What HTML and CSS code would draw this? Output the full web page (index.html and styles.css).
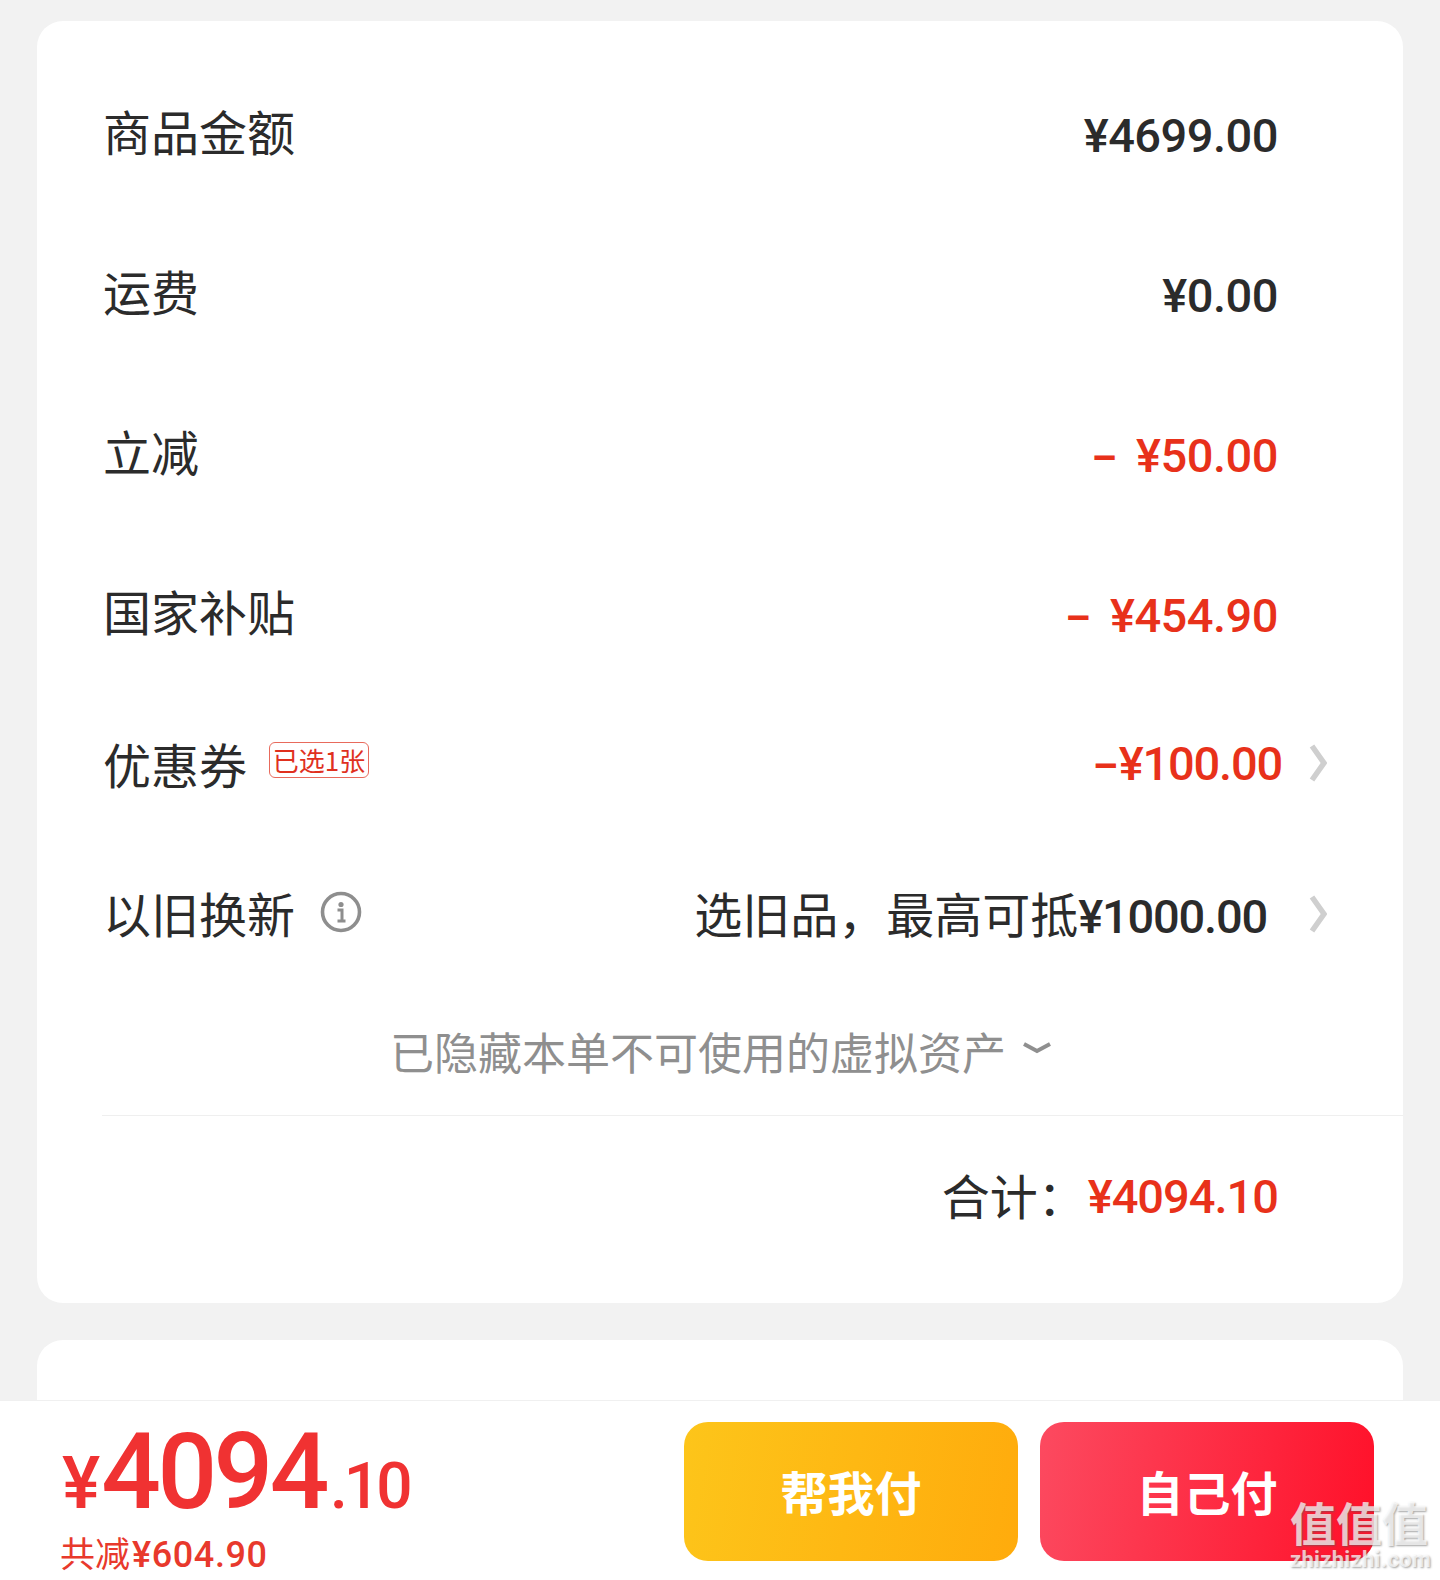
FILE: index.html
```html
<!DOCTYPE html>
<html lang="zh-CN">
<head>
<meta charset="utf-8">
<title>订单金额</title>
<link rel="stylesheet" href="styles.css">
</head>
<body>
<main class="page">
  <section class="card summary">
    <div class="row row-tall"><span class="label">商品金额</span><span class="amount pad-end">¥4699.00</span></div>
    <div class="row row-tall"><span class="label">运费</span><span class="amount pad-end">¥0.00</span></div>
    <div class="row row-tall"><span class="label">立减</span><span class="amount red pad-end"><span class="minus">–</span>¥50.00</span></div>
    <div class="row row-tall"><span class="label">国家补贴</span><span class="amount red pad-end"><span class="minus">–</span>¥454.90</span></div>
    <div class="row row-coupon">
      <span class="label-group"><span class="label">优惠券</span><span class="tag">已选1张</span></span>
      <span class="value-group">
        <span class="amount tight red"><span class="minus-tight">–</span>¥100.00</span>
        <svg class="chevron" viewBox="0 0 18 38" aria-hidden="true"><path d="M3 2 L15 19 L3 36"/></svg>
      </span>
    </div>
    <div class="row row-trade">
      <span class="label-group"><span class="label">以旧换新</span>
        <svg class="info" viewBox="0 0 42 42" aria-hidden="true"><circle cx="21" cy="21" r="18.5"/><circle class="dot" cx="21" cy="13.5" r="2.6"/><path d="M17.5 19 H22 V30 M17.5 30 H25.5"/></svg>
      </span>
      <span class="value-group trade"><span class="trade-text">选旧品，最高可抵<span class="amount tight">¥1000.00</span></span>
        <svg class="chevron" viewBox="0 0 18 38" aria-hidden="true"><path d="M3 2 L15 19 L3 36"/></svg>
      </span>
    </div>
    <div class="hidden-note"><span>已隐藏本单不可使用的虚拟资产</span>
      <svg class="caret" viewBox="0 0 30 12" aria-hidden="true"><path d="M2 2 L15 9 L28 2"/></svg>
    </div>
    <div class="total"><span class="label total-label">合计：</span><span class="amount total-amount red">¥4094.10</span></div>
  </section>
  <section class="card stub"></section>
</main>
<footer class="bar">
  <div class="price">
    <div class="price-main"><span class="yen">¥</span><span class="big">4094</span><span class="cents">.10</span></div>
    <div class="saved">共减<span class="saved-num">¥604.90</span></div>
  </div>
  <div class="actions">
    <button class="btn btn-help">帮我付</button>
    <button class="btn btn-self">自己付</button>
  </div>
</footer>
<div class="watermark"><div class="wm-cn">值值值</div><div class="wm-en">zhizhizhi.com</div></div>
</body>
</html>
```
FILE: styles.css
```css
* { box-sizing: border-box; }
html, body { margin: 0; padding: 0; }
body {
  width: 1440px;
  height: 1580px;
  position: relative;
  overflow: hidden;
  background: #f2f2f2;
  color: #2b2b2b;
  font-family: "Noto Sans CJK SC", "Roboto", sans-serif;
}
.page { padding: 21px 37px 0; display: flex; flex-direction: column; gap: 37px; }
.card { background: #fff; border-radius: 26px; }
.summary { height: 1282px; padding-top: 32px; }
.stub { height: 300px; }
.row { display: flex; align-items: center; justify-content: space-between; padding-left: 66px; }
.row-tall { height: 160px; }
.row-coupon { height: 146px; }
.row-trade { height: 152px; }
.label { font-size: 48px; line-height: 1; padding-bottom: 6px; color: #2b2b2b; }
.label-group { display: flex; align-items: center; }
.amount {
  font-family: "Roboto", sans-serif;
  font-weight: 500;
  font-size: 47px;
  letter-spacing: -0.5px;
  line-height: 1;
  color: #2b2b2b;
}
.amount.tight { letter-spacing: -1.2px; }
.amount.red { color: #e8311a; }
.pad-end { margin-right: 125px; padding-top: 4px; }
.minus { display: inline-block; margin-right: 20px; font-weight: 700; font-size: 40px; }
.minus-tight { display: inline-block; margin-right: 2px; font-weight: 700; font-size: 40px; }
.tag {
  margin-left: 22px;
  margin-bottom: 12px;
  width: 100px;
  height: 36px;
  border: 1px solid #e86a5c;
  border-radius: 6px;
  color: #e0301e;
  font-size: 26px;
  line-height: 33px;
  text-align: center;
  white-space: nowrap;
}
.value-group { display: flex; align-items: center; margin-right: 76px; padding-bottom: 6px; }
.chevron { width: 18px; height: 38px; margin-left: 27px; fill: none; stroke: #cfcfcf; stroke-width: 5.5; }
.trade { padding-bottom: 2px; }
.trade .chevron { margin-left: 42px; }
.trade-text { font-size: 48px; line-height: 1; color: #2b2b2b; white-space: nowrap; }
.info { width: 42px; height: 42px; margin-left: 25px; margin-bottom: 7px; fill: none; stroke: #8e8e8e; stroke-width: 3.6; }
.info .dot { fill: #8e8e8e; stroke: none; }
.info path { stroke-width: 3; }
.hidden-note {
  height: 124px;
  display: flex;
  align-items: center;
  justify-content: center;
  gap: 16px;
  padding: 0 0 4px 2px;
  font-size: 44px;
  color: #8f8f8f;
}
.caret { width: 30px; height: 12px; margin-top: -6px; fill: none; stroke: #8f8f8f; stroke-width: 4; }
.total {
  margin-left: 65px;
  height: 160px;
  border-top: 1px solid #efefef;
  display: flex;
  align-items: center;
  justify-content: flex-end;
  padding-right: 125px;
}
.total-label { margin-right: 2px; padding-bottom: 4px; }
.total-amount { letter-spacing: -1px; padding-top: 2px; }
.bar {
  position: absolute;
  left: 0;
  right: 0;
  bottom: 0;
  height: 180px;
  background: #fff;
  border-top: 1px solid #f0f0f0;
  display: flex;
  justify-content: space-between;
  padding: 21px 66px 19px 62px;
}
.price { color: #f03232; font-family: "Roboto", sans-serif; font-weight: 500; }
.price-main { display: flex; align-items: baseline; height: 110px; line-height: 102px; white-space: nowrap; }
.yen { font-size: 72px; margin-right: 1px; }
.big { font-size: 105px; letter-spacing: -3.5px; }
.cents { font-size: 64px; font-weight: 500; margin-left: 4px; letter-spacing: -4px; }
.saved { margin-left: -2px; font-family: "Noto Sans CJK SC", sans-serif; font-weight: 400; font-size: 35px; line-height: 40px; color: #e8392c; white-space: nowrap; }
.saved-num { font-family: "Roboto", sans-serif; font-weight: 500; font-size: 36px; letter-spacing: 0.6px; margin-left: 2px; }
.actions { display: flex; gap: 22px; }
.btn {
  width: 334px;
  height: 139px;
  border: 0;
  border-radius: 24px;
  color: #fff;
  font-family: "Noto Sans CJK SC", sans-serif;
  font-weight: 700;
  font-size: 47px;
  padding: 0 0 2px;
}
.btn-help { background: linear-gradient(100deg, #fdc51a, #ffab0c); }
.btn-self { background: linear-gradient(100deg, #fc4a60, #ff1029); }
.watermark {
  position: absolute;
  left: 1290px;
  top: 1494px;
  width: 144px;
  color: rgba(255, 255, 255, 0.72);
  text-shadow: 1px 1px 2px rgba(90, 90, 90, 0.55);
}
.wm-cn { font-size: 46px; line-height: 54px; font-weight: 700; white-space: nowrap; }
.wm-en { font-family: "Roboto", sans-serif; font-size: 22px; line-height: 24px; letter-spacing: 0.3px; font-weight: 700; white-space: nowrap; }
```
